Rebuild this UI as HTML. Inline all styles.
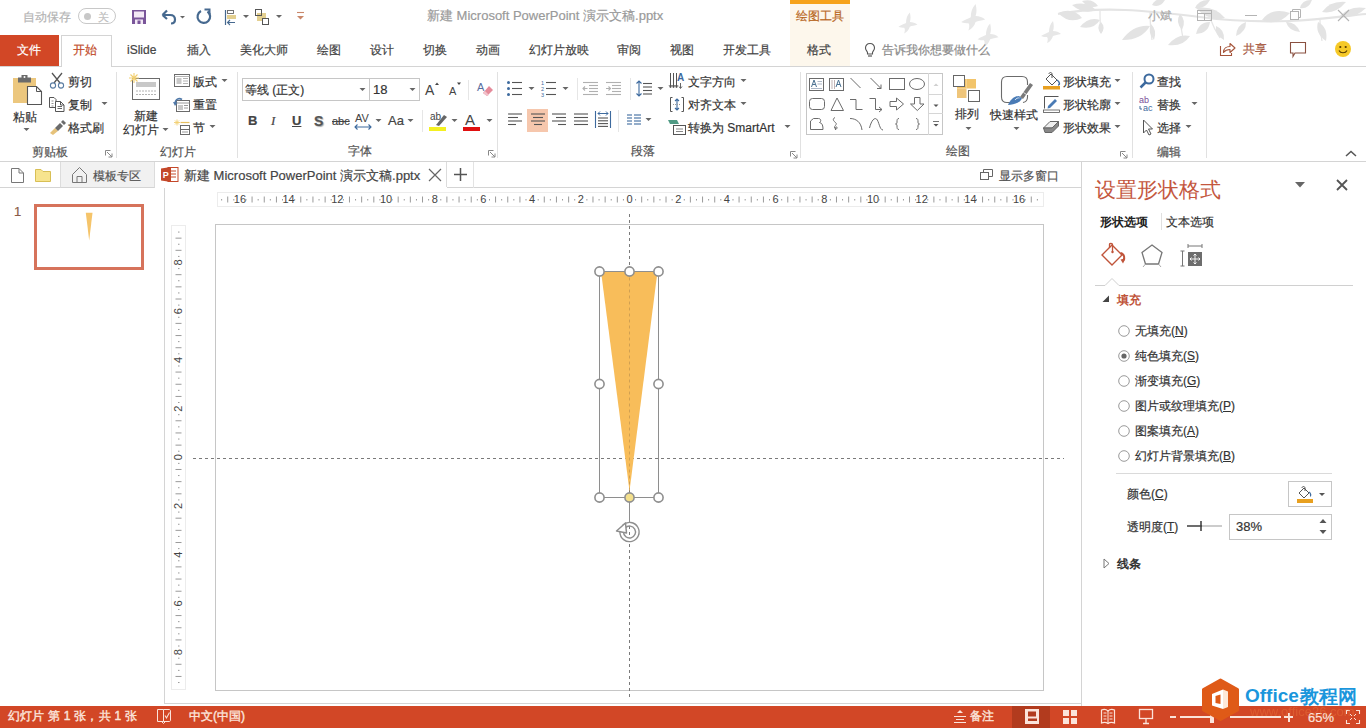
<!DOCTYPE html><html><head><meta charset="utf-8"><style>
*{margin:0;padding:0;box-sizing:border-box}
html,body{width:1366px;height:728px;overflow:hidden;background:#fff;font-family:"Liberation Sans",sans-serif;}
.t{position:absolute;white-space:nowrap;line-height:16px;-webkit-text-stroke-width:0.2px}
.a{position:absolute}
svg{position:absolute;overflow:visible}
</style></head><body><svg class="a" style="left:0;top:0" width="1366" height="66"><defs><filter id="bl"><feGaussianBlur stdDeviation="0.5"/></filter></defs><g filter="url(#bl)"><path d="M1058 14 C1080 10 1100 9 1125 10 C1150 11 1175 14 1200 17 C1230 21 1260 22 1290 21 C1320 20 1345 16 1366 14" stroke="#e4e4e4" stroke-width="2.2" fill="none"/><path d="M1100 10 C1100 18 1100 26 1101 33 M1150 12 C1150 22 1151 32 1152 40 M1180 15 C1180 25 1182 32 1183 38 M1320 20 C1320 28 1321 35 1322 41 M1210 18 C1213 26 1216 32 1220 38" stroke="#e6e6e6" stroke-width="1.3" fill="none"/><path d="M0 0 Q11.0 -9.0 24.5 0 Q11.0 9.0 0 0 Z" transform="translate(1082 18) rotate(-168.2)" fill="#e3e3e3"/><path d="M0 0 Q11.0 -7.5 24.5 0 Q11.0 7.5 0 0 Z" transform="translate(1096 10) rotate(-168.2)" fill="#e3e3e3"/><path d="M0 0 Q9.5 -7.5 21.2 0 Q9.5 7.5 0 0 Z" transform="translate(1100 20) rotate(160.7)" fill="#e3e3e3"/><path d="M0 0 Q5.4 -5.2 12.0 0 Q5.4 5.2 0 0 Z" transform="translate(1101 22) rotate(90.0)" fill="#e3e3e3"/><path d="M0 0 Q7.5 -6.0 16.8 0 Q7.5 6.0 0 0 Z" transform="translate(1098 6) rotate(-162.6)" fill="#e3e3e3"/><path d="M0 0 Q14.1 -9.0 31.3 0 Q14.1 9.0 0 0 Z" transform="translate(1150 26) rotate(153.4)" fill="#e3e3e3"/><path d="M0 0 Q7.3 -5.2 16.3 0 Q7.3 5.2 0 0 Z" transform="translate(1151 24) rotate(79.4)" fill="#e3e3e3"/><path d="M0 0 Q10.7 -7.5 23.8 0 Q10.7 7.5 0 0 Z" transform="translate(1190 36) rotate(157.8)" fill="#e3e3e3"/><path d="M0 0 Q7.3 -6.0 16.1 0 Q7.3 6.0 0 0 Z" transform="translate(1180 14) rotate(82.9)" fill="#e3e3e3"/><path d="M0 0 Q6.3 -6.0 13.9 0 Q6.3 6.0 0 0 Z" transform="translate(1152 5) rotate(-21.0)" fill="#e3e3e3"/><path d="M0 0 Q7.7 -6.0 17.0 0 Q7.7 6.0 0 0 Z" transform="translate(1195 8) rotate(-28.1)" fill="#e3e3e3"/><path d="M0 0 Q13.8 -9.0 30.7 0 Q13.8 9.0 0 0 Z" transform="translate(1225 18) rotate(-161.0)" fill="#e3e3e3"/><path d="M0 0 Q8.3 -7.5 18.4 0 Q8.3 7.5 0 0 Z" transform="translate(1210 22) rotate(139.4)" fill="#e3e3e3"/><path d="M0 0 Q7.3 -6.0 16.1 0 Q7.3 6.0 0 0 Z" transform="translate(1216 26) rotate(60.3)" fill="#e3e3e3"/><path d="M0 0 Q13.0 -10.5 28.9 0 Q13.0 10.5 0 0 Z" transform="translate(1262 20) rotate(-14.0)" fill="#e3e3e3"/><path d="M0 0 Q6.5 -6.0 14.4 0 Q6.5 6.0 0 0 Z" transform="translate(1300 8) rotate(-33.7)" fill="#e3e3e3"/><path d="M0 0 Q9.3 -7.5 20.6 0 Q9.3 7.5 0 0 Z" transform="translate(1318 22) rotate(67.2)" fill="#e3e3e3"/><path d="M0 0 Q11.7 -7.5 26.0 0 Q11.7 7.5 0 0 Z" transform="translate(1322 12) rotate(-22.6)" fill="#e3e3e3"/><path d="M0 0 Q12.2 -7.5 27.2 0 Q12.2 7.5 0 0 Z" transform="translate(1340 16) rotate(-17.1)" fill="#e3e3e3"/><path d="M0 0 Q7.7 -6.0 17.2 0 Q7.7 6.0 0 0 Z" transform="translate(1246 22) rotate(125.5)" fill="#e3e3e3"/><path d="M0 0 Q7.7 -6.0 17.2 0 Q7.7 6.0 0 0 Z" transform="translate(1286 22) rotate(35.5)" fill="#e3e3e3"/><g transform="translate(907 22) scale(0.95)"><path d="M-9 5 C-6 3 -3 2 -1 1 C-1 -3 0 -7 3 -10 C4 -6 4 -3 3 0 C6 0 9 1 11 3 C8 4 5 4 3 5 C2 8 0 11 -3 12 C-2 9 -2 7 -3 6 C-5 6 -7 6 -9 5 Z" fill="#e7e7e7"/></g><g transform="translate(972 16) scale(1.2)"><path d="M-9 5 C-6 3 -3 2 -1 1 C-1 -3 0 -7 3 -10 C4 -6 4 -3 3 0 C6 0 9 1 11 3 C8 4 5 4 3 5 C2 8 0 11 -3 12 C-2 9 -2 7 -3 6 C-5 6 -7 6 -9 5 Z" fill="#e7e7e7"/></g><g transform="translate(987 34) scale(1.05)"><path d="M-9 5 C-6 3 -3 2 -1 1 C-1 -3 0 -7 3 -10 C4 -6 4 -3 3 0 C6 0 9 1 11 3 C8 4 5 4 3 5 C2 8 0 11 -3 12 C-2 9 -2 7 -3 6 C-5 6 -7 6 -9 5 Z" fill="#e7e7e7"/></g><g transform="translate(1050 31) scale(1.0)"><path d="M-9 5 C-6 3 -3 2 -1 1 C-1 -3 0 -7 3 -10 C4 -6 4 -3 3 0 C6 0 9 1 11 3 C8 4 5 4 3 5 C2 8 0 11 -3 12 C-2 9 -2 7 -3 6 C-5 6 -7 6 -9 5 Z" fill="#e7e7e7"/></g></g></svg>
<div class="t" style="left:23px;top:9px;font-size:12px;color:#b4b4b4;font-weight:normal;">自动保存</div>
<div class="a" style="left:78px;top:8px;width:38px;height:16px;border:1px solid #c8c8c8;border-radius:8px;"></div>
<div class="a" style="left:84px;top:13px;width:7px;height:7px;border-radius:50%;background:#c8c8c8"></div>
<div class="t" style="left:98px;top:9px;font-size:11px;color:#c0c0c0;font-weight:normal;">关</div>
<svg style="left:131px;top:9px" width="16" height="16"><rect x="1" y="1" width="14" height="14" fill="#7a569a"/><rect x="3" y="2.5" width="10" height="6" fill="#f3e9f5"/><rect x="4" y="10.5" width="8" height="4.5" fill="#f3e9f5"/><rect x="6.5" y="11.5" width="3" height="3.5" fill="#7a569a"/></svg>
<svg style="left:159px;top:9px" width="30" height="16"><path d="M3.5 6 L8 1.5 M3.5 6 L8 10 M3.5 6 H11 C14.5 6 16 8 16 10.5 C16 13 14.5 14.5 12 14.5" stroke="#46698f" stroke-width="2.2" fill="none"/><path d="M21 7 L26 7 L23.5 9.5 Z" fill="#666"/></svg>
<svg style="left:195px;top:8px" width="18" height="18"><path d="M12.5 3.5 A6.3 6.3 0 1 1 6 3" stroke="#46698f" stroke-width="2.2" fill="none"/><path d="M9.5 1.5 H14.5 V6.5" stroke="#46698f" stroke-width="2" fill="none"/></svg>
<svg style="left:224px;top:8px" width="30" height="18"><path d="M1.5 2 V17" stroke="#46698f" stroke-width="1.2"/><rect x="3.5" y="2.5" width="6" height="3" fill="#fff" stroke="#666" stroke-width="0.9"/><rect x="3" y="7" width="9" height="4" fill="#e3cf8f"/><path d="M11 14.5 H3.5 M6 12 L3.5 14.5 L6 17" stroke="#46698f" stroke-width="1.1" fill="none"/><path d="M19 7 L25 7 L22 10 Z" fill="#666"/></svg>
<svg style="left:254px;top:8px" width="32" height="18"><rect x="3" y="5" width="9" height="8" fill="#e3cf8f"/><rect x="1.5" y="1.5" width="6" height="6" fill="none" stroke="#555"/><rect x="8.5" y="10.5" width="6" height="6" fill="#fff" stroke="#555"/><path d="M22 7 L28 7 L25 10 Z" fill="#666"/></svg>
<svg style="left:296px;top:11px" width="10" height="12"><path d="M1 1.5 H8" stroke="#c9876a" stroke-width="1.1"/><path d="M1 5 L8 5 L4.5 8.5 Z" fill="#c9876a"/></svg>
<div class="t" style="left:427px;top:8px;font-size:13px;color:#9a9a9a;font-weight:normal;">新建 Microsoft PowerPoint 演示文稿.pptx</div>
<div class="a" style="left:790px;top:0;width:60px;height:4px;background:#f6a21a"></div>
<div class="a" style="left:790px;top:4px;width:60px;height:62px;background:#fdf7ec"></div>
<div class="t" style="left:796px;top:8px;font-size:12px;color:#b8671e;font-weight:normal;">绘图工具</div>
<div class="t" style="left:1148px;top:8px;font-size:12px;color:#a8a8a8;font-weight:normal;">小斌</div>
<svg style="left:1196px;top:9px" width="18" height="14"><rect x="1.5" y="1.5" width="14" height="10" fill="none" stroke="#b4b4b4"/><path d="M1.5 4.5 H15.5 M8.5 4.5 V11.5" stroke="#b4b4b4"/></svg>
<div class="a" style="left:1245px;top:15px;width:12px;height:1px;background:#b4b4b4"></div>
<svg style="left:1289px;top:8px" width="14" height="14"><rect x="1.5" y="3.5" width="8" height="8" fill="none" stroke="#b4b4b4"/><path d="M3.5 3.5 V1.5 H11.5 V9.5 H9.5" stroke="#b4b4b4" fill="none"/></svg>
<svg style="left:1337px;top:9px" width="14" height="14"><path d="M1 1 L12 12 M12 1 L1 12" stroke="#b4b4b4" stroke-width="1.1"/></svg>
<div class="a" style="left:0;top:35px;width:59px;height:31px;background:#d24726"></div>
<div class="t" style="left:17px;top:42px;font-size:12px;color:#fff;font-weight:normal;">文件</div>
<div class="a" style="left:61px;top:35px;width:51px;height:32px;border:1px solid #d4d4d4;border-bottom:none;background:#fff"></div>
<div class="t" style="left:73px;top:42px;font-size:12px;color:#c14b29;font-weight:normal;">开始</div>
<div class="t" style="left:127px;top:42px;font-size:12px;color:#444;font-weight:normal;">iSlide</div>
<div class="t" style="left:187px;top:42px;font-size:12px;color:#444;font-weight:normal;">插入</div>
<div class="t" style="left:240px;top:42px;font-size:12px;color:#444;font-weight:normal;">美化大师</div>
<div class="t" style="left:317px;top:42px;font-size:12px;color:#444;font-weight:normal;">绘图</div>
<div class="t" style="left:370px;top:42px;font-size:12px;color:#444;font-weight:normal;">设计</div>
<div class="t" style="left:423px;top:42px;font-size:12px;color:#444;font-weight:normal;">切换</div>
<div class="t" style="left:476px;top:42px;font-size:12px;color:#444;font-weight:normal;">动画</div>
<div class="t" style="left:529px;top:42px;font-size:12px;color:#444;font-weight:normal;">幻灯片放映</div>
<div class="t" style="left:617px;top:42px;font-size:12px;color:#444;font-weight:normal;">审阅</div>
<div class="t" style="left:670px;top:42px;font-size:12px;color:#444;font-weight:normal;">视图</div>
<div class="t" style="left:723px;top:42px;font-size:12px;color:#444;font-weight:normal;">开发工具</div>
<div class="t" style="left:807px;top:42px;font-size:12px;color:#444;font-weight:normal;">格式</div>
<svg style="left:864px;top:42px" width="12" height="16"><path d="M6 1.5 C3 1.5 1.5 3.5 1.5 6 C1.5 8 3 9 3.5 10.5 V12 H8.5 V10.5 C9 9 10.5 8 10.5 6 C10.5 3.5 9 1.5 6 1.5 Z" fill="none" stroke="#555" stroke-width="1.1"/><path d="M4 14 H8" stroke="#555" stroke-width="1.2"/></svg>
<div class="t" style="left:882px;top:42px;font-size:12px;color:#8a8a8a;font-weight:normal;">告诉我你想要做什么</div>
<svg style="left:1219px;top:41px" width="18" height="16"><path d="M1.5 5 V14.5 H12.5 V12" stroke="#a5543a" stroke-width="1.1" fill="none"/><path d="M4.5 11.5 C4.5 7.5 7.5 5.5 11 5.5 V2.5 L16 7 L11 11.5 V8.5 C8.5 8.5 6 9.5 4.5 11.5 Z" fill="none" stroke="#a5543a" stroke-width="1.1" stroke-linejoin="round"/></svg>
<div class="t" style="left:1243px;top:41px;font-size:12px;color:#a5543a;font-weight:normal;">共享</div>
<svg style="left:1289px;top:41px" width="18" height="17"><path d="M1.5 1.5 H16.5 V12 H6 L4 15.5 V12 H1.5 Z" fill="none" stroke="#8a5040" stroke-width="1.1"/></svg>
<svg style="left:1334px;top:40px" width="18" height="18"><circle cx="9" cy="9" r="8" fill="#f6c928"/><circle cx="6.3" cy="7" r="1.1" fill="#5a3d00"/><circle cx="11.7" cy="7" r="1.1" fill="#5a3d00"/><path d="M5 10.5 C6.5 13.5 11.5 13.5 13 10.5" stroke="#5a3d00" stroke-width="1.2" fill="none"/></svg>
<div class="a" style="left:0;top:66px;width:1366px;height:1px;background:#d4d4d4"></div>
<div class="a" style="left:62px;top:66px;width:49px;height:1px;background:#fff"></div>
<svg style="left:12px;top:74px" width="32" height="32"><rect x="1" y="4" width="23" height="25" fill="#ecc77e"/><path d="M6 3.5 H19 V8.5 H6 Z" fill="#6b6b6b"/><path d="M9.5 1 H15.5 V4 H9.5 Z" fill="#6b6b6b"/><circle cx="12.5" cy="3" r="1" fill="#fff"/><path d="M15.5 12.5 H24.5 L29.5 17.5 V30.5 H15.5 Z" fill="#fff" stroke="#555" stroke-width="1.1"/><path d="M24.5 12.5 V17.5 H29.5" fill="none" stroke="#555" stroke-width="1"/></svg>
<div class="t" style="left:13px;top:109px;font-size:12px;color:#333;font-weight:normal;">粘贴</div>
<svg style="left:23px;top:128px" width="7" height="4"><path d="M0.5 0 H6.5 L3.5 3 Z" fill="#666"/></svg>
<svg style="left:49px;top:72px" width="16" height="17"><path d="M3 1 L11 11 M13 1 L5 11" stroke="#555" stroke-width="1.3"/><circle cx="4" cy="13.5" r="2.6" fill="none" stroke="#5b7da3" stroke-width="1.1"/><circle cx="12" cy="13.5" r="2.6" fill="none" stroke="#5b7da3" stroke-width="1.1"/></svg>
<div class="t" style="left:68px;top:74px;font-size:12px;color:#333;font-weight:normal;">剪切</div>
<svg style="left:48px;top:96px" width="18" height="17"><path d="M1.5 1.5 H6 L8 3.5 V11.5 H1.5 Z" fill="#fff" stroke="#555"/><path d="M3.5 5 H5.5 M3.5 7.5 H5.5 M3.5 10 H5.5" stroke="#777" stroke-width="0.8"/><path d="M7.5 5.5 H12.5 L16 9 V15.5 H7.5 Z" fill="#fff" stroke="#555"/><path d="M12.5 5.5 V9 H16" fill="none" stroke="#555"/><path d="M9.5 10.5 H14 M9.5 12.5 H14" stroke="#555" stroke-width="0.9"/></svg>
<div class="t" style="left:68px;top:97px;font-size:12px;color:#333;font-weight:normal;">复制</div>
<svg style="left:101px;top:102px" width="7" height="4"><path d="M0.5 0 H6.5 L3.5 3 Z" fill="#666"/></svg>
<svg style="left:49px;top:119px" width="18" height="16"><path d="M1 14 L6 9 L9 12 L4 16 Z" fill="#e6c27a"/><path d="M6 9 L11 4 L14 7 L9 12 Z" fill="#6b6b6b"/><path d="M12 3 L14 1 L17 4 L15 6 Z" fill="#6b6b6b"/></svg>
<div class="t" style="left:68px;top:120px;font-size:12px;color:#333;font-weight:normal;">格式刷</div>
<div class="t" style="left:32px;top:144px;font-size:12px;color:#555;font-weight:normal;">剪贴板</div>
<svg style="left:105px;top:150px" width="8" height="8"><path d="M0.5 0.5 H5.5 M0.5 0.5 V5.5" stroke="#888" stroke-width="1"/><path d="M2 2 L7 7 M7 3.5 V7 H3.5" stroke="#888" stroke-width="1" fill="none"/></svg>
<div class="a" style="left:116px;top:72px;width:1px;height:86px;background:#e1e1e1"></div>
<svg style="left:128px;top:72px" width="34" height="30"><rect x="4.5" y="6.5" width="27" height="21" fill="#fff" stroke="#6b6b6b"/><rect x="8" y="10" width="20" height="5" fill="#c8c8c8"/><path d="M8 19 H28 M8 22.5 H28" stroke="#b4b4b4" stroke-width="1" stroke-dasharray="2 1"/><path d="M6 1 V11 M1 6 H11 M2.5 2.5 L9.5 9.5 M9.5 2.5 L2.5 9.5" stroke="#f2cf70" stroke-width="1.1"/></svg>
<div class="t" style="left:134px;top:108px;font-size:12px;color:#333;font-weight:normal;">新建</div>
<div class="t" style="left:123px;top:122px;font-size:12px;color:#333;font-weight:normal;">幻灯片</div>
<svg style="left:162px;top:128px" width="7" height="4"><path d="M0.5 0 H6.5 L3.5 3 Z" fill="#666"/></svg>
<svg style="left:173px;top:73px" width="18" height="15"><rect x="1.5" y="1.5" width="15" height="12" fill="#fff" stroke="#6b6b6b"/><rect x="3.5" y="5" width="5" height="6" fill="#c8c8c8"/><path d="M10 5.5 H15 M10 8 H15 M10 10.5 H15 M1.5 3.5 H16.5" stroke="#b4b4b4"/></svg>
<div class="t" style="left:193px;top:74px;font-size:12px;color:#333;font-weight:normal;">版式</div>
<svg style="left:221px;top:79px" width="7" height="4"><path d="M0.5 0 H6.5 L3.5 3 Z" fill="#666"/></svg>
<svg style="left:173px;top:96px" width="18" height="17"><rect x="3.5" y="4.5" width="13" height="11" fill="#fff" stroke="#6b6b6b"/><rect x="5" y="9" width="5" height="5" fill="#c8c8c8"/><path d="M11 9.5 H15 M11 12 H15 M3.5 7 H16.5" stroke="#9a9a9a"/><path d="M2 8 C2 3 6 1.5 9 3.5" stroke="#4f78a8" stroke-width="1.6" fill="none"/><path d="M0 6 L2 10 L4.5 6.5 Z" fill="#4f78a8"/></svg>
<div class="t" style="left:193px;top:97px;font-size:12px;color:#333;font-weight:normal;">重置</div>
<svg style="left:173px;top:119px" width="18" height="17"><path d="M7.5 3.5 H16.5" stroke="#e8c060" stroke-width="1.2"/><rect x="7.5" y="6.5" width="9" height="9" fill="#fff" stroke="#6b6b6b"/><path d="M7.5 10.5 H16.5" stroke="#6b6b6b"/><rect x="9" y="12" width="6" height="2" fill="#ccc"/><path d="M4 0.5 V6.5 M1 3.5 H7 M2 1.5 L6 5.5 M6 1.5 L2 5.5" stroke="#f2cf70" stroke-width="0.9"/></svg>
<div class="t" style="left:193px;top:120px;font-size:12px;color:#333;font-weight:normal;">节</div>
<svg style="left:209px;top:125px" width="7" height="4"><path d="M0.5 0 H6.5 L3.5 3 Z" fill="#666"/></svg>
<div class="t" style="left:160px;top:144px;font-size:12px;color:#555;font-weight:normal;">幻灯片</div>
<div class="a" style="left:237px;top:72px;width:1px;height:86px;background:#e1e1e1"></div>
<div class="a" style="left:242px;top:78px;width:128px;height:23px;border:1px solid #c6c6c6;background:#fff"></div>
<div class="t" style="left:245px;top:82px;font-size:12px;color:#333;font-weight:normal;">等线 (正文)</div>
<svg style="left:359px;top:88px" width="7" height="4"><path d="M0.5 0 H6.5 L3.5 3 Z" fill="#666"/></svg>
<div class="a" style="left:369px;top:78px;width:51px;height:23px;border:1px solid #c6c6c6;background:#fff"></div>
<div class="t" style="left:373px;top:82px;font-size:12px;color:#333;font-weight:normal;font-size:13px;">18</div>
<svg style="left:409px;top:88px" width="7" height="4"><path d="M0.5 0 H6.5 L3.5 3 Z" fill="#666"/></svg>
<svg style="left:425px;top:81px" width="38" height="16"><text x="0" y="14" font-size="14" fill="#444" font-family="Liberation Sans">A</text><path d="M10 4 L12 1.5 L14 4 Z" fill="#444"/><text x="24" y="14" font-size="11" fill="#444" font-family="Liberation Sans">A</text><path d="M32 1.5 L36 1.5 L34 4 Z" fill="#444"/></svg>
<div class="a" style="left:468px;top:80px;width:1px;height:20px;background:#e6e6e6"></div>
<svg style="left:477px;top:80px" width="17" height="17"><text x="0" y="11" font-size="11" fill="#5a6fa0" font-family="Liberation Sans">A</text><path d="M6 13 L12 6 L16 10 L10 16 Z" fill="#e58a9a"/><path d="M6 13 L8 11 L12 15 L10 16 Z" fill="#f2c1ca"/></svg>
<div class="t" style="left:248px;top:113px;font-size:13px;font-weight:bold;color:#444">B</div>
<div class="t" style="left:271px;top:113px;font-size:13px;font-style:italic;font-family:'Liberation Serif';color:#444">I</div>
<div class="t" style="left:292px;top:113px;font-size:13px;text-decoration:underline;color:#444;font-weight:bold">U</div>
<div class="t" style="left:314px;top:113px;font-size:14px;font-weight:bold;color:#555;text-shadow:1px 1px 1px #aaa">S</div>
<div class="t" style="left:332px;top:113px;font-size:11px;color:#444;text-decoration:line-through">abc</div>
<svg style="left:354px;top:112px" width="20" height="20"><text x="1" y="10" font-size="11" fill="#444" font-family="Liberation Sans">AV</text><path d="M1 15 H17 M3.5 12.5 L1 15 L3.5 17.5 M14.5 12.5 L17 15 L14.5 17.5" stroke="#3d6a9e" stroke-width="1.1" fill="none"/></svg>
<svg style="left:375px;top:119px" width="7" height="4"><path d="M0.5 0 H6.5 L3.5 3 Z" fill="#666"/></svg>
<div class="t" style="left:388px;top:113px;font-size:13px;color:#444">Aa</div>
<svg style="left:407px;top:119px" width="7" height="4"><path d="M0.5 0 H6.5 L3.5 3 Z" fill="#666"/></svg>
<div class="a" style="left:422px;top:110px;width:1px;height:22px;background:#e6e6e6"></div>
<svg style="left:429px;top:110px" width="20" height="22"><text x="1" y="10" font-size="10" fill="#444" font-family="Liberation Sans">ab</text><path d="M7 15 L15 5 L18 7 L10 16 Z" fill="#666"/><rect x="0" y="17" width="17" height="4" fill="#f4f020"/></svg>
<svg style="left:451px;top:119px" width="7" height="4"><path d="M0.5 0 H6.5 L3.5 3 Z" fill="#666"/></svg>
<svg style="left:463px;top:110px" width="20" height="22"><text x="2" y="15" font-size="15" fill="#444" font-family="Liberation Sans">A</text><rect x="0" y="17" width="17" height="4" fill="#e01010"/></svg>
<svg style="left:486px;top:119px" width="7" height="4"><path d="M0.5 0 H6.5 L3.5 3 Z" fill="#666"/></svg>
<div class="t" style="left:348px;top:143px;font-size:12px;color:#555;font-weight:normal;">字体</div>
<svg style="left:488px;top:150px" width="8" height="8"><path d="M0.5 0.5 H5.5 M0.5 0.5 V5.5" stroke="#888" stroke-width="1"/><path d="M2 2 L7 7 M7 3.5 V7 H3.5" stroke="#888" stroke-width="1" fill="none"/></svg>
<div class="a" style="left:497px;top:72px;width:1px;height:86px;background:#e1e1e1"></div>
<svg style="left:506px;top:80px" width="18" height="17"><circle cx="2.5" cy="2.5" r="1.5" fill="#3d6a9e"/><circle cx="2.5" cy="8.5" r="1.5" fill="#3d6a9e"/><circle cx="2.5" cy="14.5" r="1.5" fill="#3d6a9e"/><path d="M6 2.5 H16" stroke="#555" stroke-width="1.1"/><path d="M6 8.5 H16" stroke="#555" stroke-width="1.1"/><path d="M6 14.5 H16" stroke="#555" stroke-width="1.1"/></svg>
<svg style="left:528px;top:87px" width="7" height="4"><path d="M0.5 0 H6.5 L3.5 3 Z" fill="#666"/></svg>
<svg style="left:541px;top:80px" width="18" height="17"><text x="0" y="5" font-size="5.5" fill="#3d6a9e" font-family="Liberation Sans">1</text><text x="0" y="11" font-size="5.5" fill="#3d6a9e" font-family="Liberation Sans">2</text><text x="0" y="17" font-size="5.5" fill="#3d6a9e" font-family="Liberation Sans">3</text><path d="M5 2.5 H15" stroke="#555" stroke-width="1.1"/><path d="M5 8.5 H15" stroke="#555" stroke-width="1.1"/><path d="M5 14.5 H15" stroke="#555" stroke-width="1.1"/></svg>
<svg style="left:562px;top:87px" width="7" height="4"><path d="M0.5 0 H6.5 L3.5 3 Z" fill="#666"/></svg>
<div class="a" style="left:577px;top:78px;width:1px;height:22px;background:#e6e6e6"></div>
<svg style="left:582px;top:81px" width="42" height="16"><path d="M1 1.5 H16" stroke="#b0b0b0" stroke-width="1.1"/><path d="M7 4.5 H16" stroke="#b0b0b0" stroke-width="1.1"/><path d="M7 7.5 H16" stroke="#b0b0b0" stroke-width="1.1"/><path d="M7 10.5 H16" stroke="#b0b0b0" stroke-width="1.1"/><path d="M1 13.5 H16" stroke="#b0b0b0" stroke-width="1.1"/><path d="M1 7.5 H5.5 M3 5.5 L1 7.5 L3 9.5" stroke="#b0b0b0" stroke-width="1.1" fill="none"/><path d="M24 1.5 H39" stroke="#b0b0b0" stroke-width="1.1"/><path d="M30 4.5 H39" stroke="#b0b0b0" stroke-width="1.1"/><path d="M30 7.5 H39" stroke="#b0b0b0" stroke-width="1.1"/><path d="M30 10.5 H39" stroke="#b0b0b0" stroke-width="1.1"/><path d="M24 13.5 H39" stroke="#b0b0b0" stroke-width="1.1"/><path d="M24 7.5 H28.5 M26.5 5.5 L28.5 7.5 L26.5 9.5" stroke="#b0b0b0" stroke-width="1.1" fill="none"/></svg>
<div class="a" style="left:630px;top:78px;width:1px;height:22px;background:#e6e6e6"></div>
<svg style="left:636px;top:79px" width="18" height="19"><path d="M3 2 V17 M0.5 4.5 L3 2 L5.5 4.5 M0.5 14.5 L3 17 L5.5 14.5" stroke="#3d6a9e" stroke-width="1.1" fill="none"/><path d="M7 4.5 H16" stroke="#555" stroke-width="1.1"/><path d="M7 8.0 H16" stroke="#555" stroke-width="1.1"/><path d="M7 11.5 H16" stroke="#555" stroke-width="1.1"/><path d="M7 15.0 H16" stroke="#555" stroke-width="1.1"/></svg>
<svg style="left:657px;top:87px" width="7" height="4"><path d="M0.5 0 H6.5 L3.5 3 Z" fill="#666"/></svg>
<svg style="left:507px;top:113px" width="16" height="14"><path d="M1 1.0 H15" stroke="#555" stroke-width="1.1"/><path d="M1 4.5 H11" stroke="#555" stroke-width="1.1"/><path d="M1 8.0 H15" stroke="#555" stroke-width="1.1"/><path d="M1 11.5 H9" stroke="#555" stroke-width="1.1"/></svg>
<div class="a" style="left:527px;top:109px;width:21px;height:23px;background:#f6c7ad"></div>
<svg style="left:530px;top:113px" width="16" height="14"><path d="M1 1.0 H15" stroke="#555" stroke-width="1.1"/><path d="M3 4.5 H13" stroke="#555" stroke-width="1.1"/><path d="M1 8.0 H15" stroke="#555" stroke-width="1.1"/><path d="M4 11.5 H12" stroke="#555" stroke-width="1.1"/></svg>
<svg style="left:551px;top:113px" width="16" height="14"><path d="M1 1.0 H15" stroke="#555" stroke-width="1.1"/><path d="M5 4.5 H15" stroke="#555" stroke-width="1.1"/><path d="M1 8.0 H15" stroke="#555" stroke-width="1.1"/><path d="M7 11.5 H15" stroke="#555" stroke-width="1.1"/></svg>
<svg style="left:573px;top:113px" width="16" height="14"><path d="M1 1.0 H15" stroke="#555" stroke-width="1.1"/><path d="M1 4.5 H15" stroke="#555" stroke-width="1.1"/><path d="M1 8.0 H15" stroke="#555" stroke-width="1.1"/><path d="M1 11.5 H15" stroke="#555" stroke-width="1.1"/></svg>
<svg style="left:594px;top:110px" width="18" height="19"><path d="M1.5 1 V18 M16.5 1 V18" stroke="#3d6a9e" stroke-width="1.1"/><path d="M4 3.5 H14 M6 1.5 L4 3.5 L6 5.5 M12 1.5 L14 3.5 L12 5.5" stroke="#3d6a9e" stroke-width="1" fill="none"/><path d="M4 8.0 H14" stroke="#555" stroke-width="1.1"/><path d="M4 10.8 H14" stroke="#555" stroke-width="1.1"/><path d="M4 13.6 H14" stroke="#555" stroke-width="1.1"/><path d="M4 16.4 H14" stroke="#555" stroke-width="1.1"/></svg>
<div class="a" style="left:618px;top:110px;width:1px;height:22px;background:#e6e6e6"></div>
<svg style="left:626px;top:114px" width="16" height="12"><path d="M1 1 H6" stroke="#3d6a9e" stroke-width="1.1"/><path d="M1 4 H6" stroke="#3d6a9e" stroke-width="1.1"/><path d="M1 7 H6" stroke="#3d6a9e" stroke-width="1.1"/><path d="M1 10 H6" stroke="#3d6a9e" stroke-width="1.1"/><path d="M8 1 H15" stroke="#3d6a9e" stroke-width="1.1"/><path d="M8 4 H15" stroke="#3d6a9e" stroke-width="1.1"/><path d="M8 7 H15" stroke="#3d6a9e" stroke-width="1.1"/><path d="M8 10 H15" stroke="#3d6a9e" stroke-width="1.1"/></svg>
<svg style="left:645px;top:118px" width="7" height="4"><path d="M0.5 0 H6.5 L3.5 3 Z" fill="#666"/></svg>
<svg style="left:669px;top:72px" width="16" height="18"><path d="M1.5 1 V15 M4.5 1 V15 M7.5 1 V15" stroke="#555"/><path d="M0 13 L1.5 16 L3 13 M3 13 L4.5 16 L6 13 M6 13 L7.5 16 L9 13" fill="none" stroke="#555" stroke-width="0.8"/><text x="8" y="9" font-size="10" font-weight="bold" fill="#3d6a9e" font-family="Liberation Sans">A</text><path d="M11.5 11 V16 M10 14.5 L11.5 16.5 L13 14.5" stroke="#555" stroke-width="0.9" fill="none"/></svg>
<div class="t" style="left:688px;top:74px;font-size:12px;color:#333;font-weight:normal;">文字方向</div>
<svg style="left:740px;top:79px" width="7" height="4"><path d="M0.5 0 H6.5 L3.5 3 Z" fill="#666"/></svg>
<svg style="left:669px;top:96px" width="16" height="17"><path d="M3.5 1.5 H1.5 V15.5 H3.5 M12.5 1.5 H14.5 V15.5 H12.5" stroke="#555" fill="none"/><path d="M8 3 V14 M6 5 L8 3 L10 5 M6 12 L8 14 L10 12" stroke="#3d6a9e" stroke-width="1.1" fill="none"/><path d="M4 8.5 H12" stroke="#999" stroke-dasharray="1 1"/></svg>
<div class="t" style="left:688px;top:97px;font-size:12px;color:#333;font-weight:normal;">对齐文本</div>
<svg style="left:740px;top:102px" width="7" height="4"><path d="M0.5 0 H6.5 L3.5 3 Z" fill="#666"/></svg>
<svg style="left:668px;top:119px" width="20" height="17"><path d="M0 1 H9 L11 5 H2 Z" fill="#4f9a84"/><rect x="5.5" y="6.5" width="12" height="9" fill="#fff" stroke="#555"/><path d="M8 10 H15 M8 12.5 H15" stroke="#888"/></svg>
<div class="t" style="left:688px;top:120px;font-size:12px;color:#333;font-weight:normal;">转换为 SmartArt</div>
<svg style="left:784px;top:125px" width="7" height="4"><path d="M0.5 0 H6.5 L3.5 3 Z" fill="#666"/></svg>
<div class="t" style="left:631px;top:143px;font-size:12px;color:#555;font-weight:normal;">段落</div>
<svg style="left:790px;top:151px" width="8" height="8"><path d="M0.5 0.5 H5.5 M0.5 0.5 V5.5" stroke="#888" stroke-width="1"/><path d="M2 2 L7 7 M7 3.5 V7 H3.5" stroke="#888" stroke-width="1" fill="none"/></svg>
<div class="a" style="left:800px;top:72px;width:1px;height:86px;background:#e1e1e1"></div>
<div class="a" style="left:806px;top:73px;width:137px;height:62px;border:1px solid #c6c6c6;background:#fff"></div>
<div class="a" style="left:928px;top:73px;width:1px;height:62px;background:#d6d6d6"></div>
<div class="a" style="left:928px;top:94px;width:15px;height:1px;background:#d6d6d6"></div>
<div class="a" style="left:928px;top:113px;width:15px;height:1px;background:#d6d6d6"></div>
<svg style="left:929px;top:74px" width="14" height="60"><path d="M4.5 12 L7 9.5 L9.5 12 Z" fill="#d0d0d0"/><path d="M4.5 30.5 H9.5 L7 33 Z" fill="#555"/><path d="M4 47.5 H10" stroke="#666" stroke-width="0.9"/><path d="M4.5 50 H9.5 L7 52.5 Z" fill="#555"/></svg>
<svg style="left:806px;top:73px" width="122" height="62">
<rect x="3.5" y="5.5" width="14" height="12" fill="none" stroke="#6b6b6b"/><path d="M5.5 14 L8 7 L10.5 14 M6.5 11.5 H9.5" stroke="#4a7090" stroke-width="1" fill="none"/><path d="M11.5 8.5 H16 M11.5 11 H16 M5 15.5 H16" stroke="#8a9ab0" stroke-width="0.7"/>
<rect x="23.5" y="5.5" width="14" height="12" fill="none" stroke="#6b6b6b"/><path d="M26 7 V16 M28.5 7 V16" stroke="#9a8080" stroke-width="0.6"/><path d="M30 14 L32.5 7 L35 14 M31 11.5 H34" stroke="#4a7090" stroke-width="1" fill="none"/>
<path d="M44.5 5 L54.5 15" stroke="#6b6b6b"/>
<path d="M64.5 5 L75 15.5 M71 15.5 H75 V11.5" stroke="#6b6b6b" fill="none"/>
<rect x="83.5" y="5.5" width="15" height="11" fill="none" stroke="#6b6b6b"/>
<ellipse cx="111" cy="11" rx="7.5" ry="5.5" fill="none" stroke="#6b6b6b"/>
<rect x="3.5" y="25.5" width="15" height="11" rx="3" fill="none" stroke="#6b6b6b"/>
<path d="M31 25 L37.5 37.5 H25 Z" fill="none" stroke="#6b6b6b"/>
<path d="M44 26.5 H50 V36.5 H56.5" stroke="#6b6b6b" fill="none"/>
<path d="M63.5 25.5 H69.5 V36.5 H76 M73 34 L76 36.5 L73 39" stroke="#6b6b6b" fill="none"/>
<path d="M84 28.5 H90.5 V25 L97.5 31 L90.5 37 V33.5 H84 Z" fill="none" stroke="#6b6b6b"/>
<path d="M108.5 24.5 H114 V31 H118 L111.3 37.5 L104.5 31 H108.5 Z" fill="none" stroke="#6b6b6b"/>
<path d="M4.5 48 L7.5 45.5 H12.5 C15 45.5 15.5 48.5 13.5 49.5 C16.5 50 17 53 17 56.5 H4.5 Z" fill="none" stroke="#6b6b6b"/>
<path d="M29 44.5 C26 46 27.5 48 29.5 49.5 C31.5 51 29 52.5 28.5 54 C28.5 56.5 31.5 56.5 31 54.5 C30.5 53 29 54 29.5 57" fill="none" stroke="#6b6b6b"/>
<path d="M44 45.5 C50 45.5 55 49 56 57" fill="none" stroke="#6b6b6b"/>
<path d="M63.5 55 C65.5 47 68.5 44.5 70.5 46 C73 48 73.5 57 77 57" fill="none" stroke="#6b6b6b"/>
<path d="M93 45.5 C91 45.5 91 47 91 49 C91 50.5 90.5 51 89.5 51 C90.5 51 91 51.5 91 53 C91 55 91 56.5 93 56.5" fill="none" stroke="#6b6b6b"/>
<path d="M110 45.5 C112 45.5 112 47 112 49 C112 50.5 112.5 51 113.5 51 C112.5 51 112 51.5 112 53 C112 55 112 56.5 110 56.5" fill="none" stroke="#6b6b6b"/>
</svg>
<svg style="left:950px;top:72px" width="34" height="32"><rect x="7" y="7" width="9.5" height="9.5" fill="#f2c46a"/><rect x="16.5" y="16.5" width="0" height="0"/><rect x="7" y="16.5" width="9.5" height="9.5" fill="#efc57a"/><rect x="16.5" y="7" width="9.5" height="9.5" fill="#f2c46a"/><rect x="3.5" y="3.5" width="11" height="11" fill="#fff" stroke="#666"/><rect x="18.5" y="18.5" width="11" height="11" fill="#fff" stroke="#666"/></svg>
<div class="t" style="left:955px;top:106px;font-size:12px;color:#333;font-weight:normal;">排列</div>
<svg style="left:965px;top:127px" width="7" height="4"><path d="M0.5 0 H6.5 L3.5 3 Z" fill="#666"/></svg>
<svg style="left:998px;top:73px" width="36" height="36"><path d="M17 29.5 H9 C5.5 29.5 3.5 27.5 3.5 24 V9 C3.5 5.5 5.5 3.5 9 3.5 H24 C27.5 3.5 29.5 5.5 29.5 9 V12" fill="none" stroke="#6b6b6b" stroke-width="1.1"/><path d="M29.5 22 V24 C29.5 27 28 29 25 29.5" fill="none" stroke="#6b6b6b" stroke-width="1.1"/><path d="M22 24 L32 10 L35 12 L25 26 Z" fill="#7a7a7a"/><path d="M25.5 19.5 L28.5 21.5" stroke="#fff" stroke-width="0.8"/><path d="M10 32 C12 27 16 23 21 23 L24 25.5 C22 30 15 32 10 32 Z" fill="#4a7bb5"/><path d="M17 27 C18 25.5 20 24.5 21.5 25" stroke="#cfe0f2" stroke-width="1" fill="none"/></svg>
<div class="t" style="left:990px;top:107px;font-size:12px;color:#333;font-weight:normal;">快速样式</div>
<svg style="left:1013px;top:127px" width="7" height="4"><path d="M0.5 0 H6.5 L3.5 3 Z" fill="#666"/></svg>
<svg style="left:1042px;top:72px" width="20" height="18"><path d="M4 7 L9 2 L15 8 L10 13 Z" fill="#fff" stroke="#555"/><path d="M7 2 C7 0 10 0 10 2 V6" stroke="#555" fill="none"/><path d="M15 8 C18 10 18 13 16 13" stroke="#3d6a9e" stroke-width="1.5" fill="none"/><rect x="1" y="14" width="17" height="3.5" fill="#e8a020"/></svg>
<div class="t" style="left:1063px;top:74px;font-size:12px;color:#333;font-weight:normal;">形状填充</div>
<svg style="left:1114px;top:79px" width="7" height="4"><path d="M0.5 0 H6.5 L3.5 3 Z" fill="#666"/></svg>
<svg style="left:1042px;top:95px" width="20" height="18"><path d="M2.5 13.5 V1.5 H16.5" stroke="#555" fill="none"/><path d="M6 11 L13 4 L15 6 L8 13 L5.5 13.5 Z" fill="#4a7bb5"/><rect x="1.5" y="15" width="16" height="2.5" fill="#fff" stroke="#555" stroke-width="0.8"/></svg>
<div class="t" style="left:1063px;top:97px;font-size:12px;color:#333;font-weight:normal;">形状轮廓</div>
<svg style="left:1114px;top:102px" width="7" height="4"><path d="M0.5 0 H6.5 L3.5 3 Z" fill="#666"/></svg>
<svg style="left:1042px;top:119px" width="20" height="16"><path d="M1.5 9 L8 2.5 H16.5 L10 9 Z" fill="#eee" stroke="#666"/><path d="M1.5 9 H10 L16.5 2.5 V7 L10 13.5 H3 Z" fill="#888" stroke="#666"/></svg>
<div class="t" style="left:1063px;top:120px;font-size:12px;color:#333;font-weight:normal;">形状效果</div>
<svg style="left:1114px;top:125px" width="7" height="4"><path d="M0.5 0 H6.5 L3.5 3 Z" fill="#666"/></svg>
<div class="t" style="left:946px;top:143px;font-size:12px;color:#555;font-weight:normal;">绘图</div>
<svg style="left:1120px;top:151px" width="8" height="8"><path d="M0.5 0.5 H5.5 M0.5 0.5 V5.5" stroke="#888" stroke-width="1"/><path d="M2 2 L7 7 M7 3.5 V7 H3.5" stroke="#888" stroke-width="1" fill="none"/></svg>
<div class="a" style="left:1132px;top:72px;width:1px;height:86px;background:#e1e1e1"></div>
<svg style="left:1139px;top:73px" width="16" height="16"><circle cx="10" cy="6" r="4.5" fill="none" stroke="#3d6a9e" stroke-width="2"/><path d="M7 9 L1.5 14.5" stroke="#3d6a9e" stroke-width="2.5"/></svg>
<div class="t" style="left:1157px;top:74px;font-size:12px;color:#333;font-weight:normal;">查找</div>
<svg style="left:1138px;top:95px" width="18" height="18"><text x="1" y="8" font-size="9" fill="#7a4f98" font-family="Liberation Sans">ab</text><text x="5" y="16" font-size="9" fill="#3d6a9e" font-family="Liberation Sans">ac</text><path d="M2 11 V14 H4" stroke="#3d6a9e" fill="none"/></svg>
<div class="t" style="left:1157px;top:97px;font-size:12px;color:#333;font-weight:normal;">替换</div>
<svg style="left:1191px;top:102px" width="7" height="4"><path d="M0.5 0 H6.5 L3.5 3 Z" fill="#666"/></svg>
<svg style="left:1142px;top:119px" width="12" height="17"><path d="M1.5 1 L1.5 14 L4.5 11 L7 16 L9 15 L6.5 10 L10.5 10 Z" fill="#fff" stroke="#555"/></svg>
<div class="t" style="left:1157px;top:120px;font-size:12px;color:#333;font-weight:normal;">选择</div>
<svg style="left:1185px;top:125px" width="7" height="4"><path d="M0.5 0 H6.5 L3.5 3 Z" fill="#666"/></svg>
<div class="t" style="left:1157px;top:144px;font-size:12px;color:#555;font-weight:normal;">编辑</div>
<div class="a" style="left:1206px;top:72px;width:1px;height:86px;background:#e1e1e1"></div>
<svg style="left:1345px;top:150px" width="12" height="8"><path d="M1 6 L6 1.5 L11 6" stroke="#555" stroke-width="1.5" fill="none"/></svg>
<div class="a" style="left:0;top:161px;width:1366px;height:1px;background:#d4d4d4"></div>
<div class="a" style="left:0;top:187px;width:1082px;height:1px;background:#d4d4d4"></div>
<svg style="left:10px;top:167px" width="16" height="17"><path d="M1.5 1.5 H9 L13.5 6 V15.5 H1.5 Z M9 1.5 V6 H13.5" fill="#fff" stroke="#777"/></svg>
<svg style="left:34px;top:167px" width="19" height="16"><path d="M1.5 2.5 H7 L9 4.5 H16.5 V14.5 H1.5 Z" fill="#f7e48e" stroke="#d8bf55"/></svg>
<div class="a" style="left:60px;top:162px;width:95px;height:26px;background:#f1f1f1;border-left:1px solid #dcdcdc;border-right:1px solid #dcdcdc;border-bottom:1px solid #d4d4d4"></div>
<svg style="left:71px;top:166px" width="17" height="18"><path d="M1.5 8.5 L8.5 1.5 L15.5 8.5 V16.5 H1.5 Z" fill="none" stroke="#777"/><path d="M6 16.5 V10.5 H11 V16.5" fill="none" stroke="#777"/></svg>
<div class="t" style="left:93px;top:168px;font-size:12px;color:#555;font-weight:normal;">模板专区</div>
<div class="a" style="left:155px;top:162px;width:292px;height:26px;background:#fff;border-right:1px solid #dcdcdc"></div>
<div class="a" style="left:155px;top:187px;width:292px;height:1px;background:#fff"></div>
<svg style="left:161px;top:166px" width="18" height="17"><rect x="7" y="1.5" width="10" height="14" fill="#fff" stroke="#c4482a"/><path d="M10 5 H15 M10 8 H15 M10 11 H15" stroke="#c4482a"/><path d="M0 2.5 L10 1 V16 L0 14.5 Z" fill="#c4482a"/><text x="1.8" y="12" font-size="9" font-weight="bold" fill="#fff" font-family="Liberation Sans">P</text></svg>
<div class="t" style="left:184px;top:168px;font-size:13px;color:#444;font-weight:normal;">新建 Microsoft PowerPoint 演示文稿.pptx</div>
<svg style="left:428px;top:168px" width="14" height="14"><path d="M1 1 L13 13 M13 1 L1 13" stroke="#666" stroke-width="1.2"/></svg>
<svg style="left:453px;top:167px" width="15" height="15"><path d="M7.5 1 V14 M1 7.5 H14" stroke="#555" stroke-width="1.5"/></svg>
<div class="a" style="left:473px;top:162px;width:1px;height:26px;background:#e3e3e3"></div>
<svg style="left:979px;top:168px" width="15" height="13"><rect x="1.5" y="4.5" width="8" height="7" fill="none" stroke="#666"/><path d="M4.5 4.5 V1.5 H13.5 V8.5 H9.5" fill="none" stroke="#666"/></svg>
<div class="t" style="left:999px;top:168px;font-size:12px;color:#555;font-weight:normal;">显示多窗口</div>
<div class="a" style="left:164px;top:188px;width:1px;height:516px;background:#d4d4d4"></div>
<div class="t" style="left:14px;top:204px;font-size:12px;color:#8a5a48;font-weight:normal;font-size:13px;">1</div>
<div class="a" style="left:34px;top:204px;width:110px;height:66px;border:3px solid #d6735b;background:#fff"></div>
<svg style="left:85px;top:212px" width="9" height="30"><path d="M0.8 0.8 H7.5 L4.2 28.5 Z" fill="#f5c46a"/></svg>
<div class="a" style="left:165px;top:703px;width:917px;height:1px;background:#d4d4d4"></div>
<div class="a" style="left:1081px;top:162px;width:1px;height:544px;background:#d4d4d4"></div>
<svg style="left:217px;top:192px" width="827" height="15"><rect x="0.5" y="0.5" width="826" height="14" fill="#fff" stroke="#d8d8d8" stroke-dasharray="1 1"/><path d="M4.637499999999989 7 V8.5" stroke="#9a9a9a" stroke-width="1"/><path d="M10.724999999999966 4.5 V10.5" stroke="#9a9a9a" stroke-width="1"/><path d="M16.8125 7 V8.5" stroke="#9a9a9a" stroke-width="1"/><text x="22.899999999999977" y="11" font-size="11" fill="#444" text-anchor="middle" font-family="Liberation Sans">16</text><path d="M28.987499999999955 7 V8.5" stroke="#9a9a9a" stroke-width="1"/><path d="M35.07499999999999 4.5 V10.5" stroke="#9a9a9a" stroke-width="1"/><path d="M41.162499999999966 7 V8.5" stroke="#9a9a9a" stroke-width="1"/><path d="M47.25 4.5 V10.5" stroke="#9a9a9a" stroke-width="1"/><path d="M53.33749999999998 7 V8.5" stroke="#9a9a9a" stroke-width="1"/><path d="M59.424999999999955 4.5 V10.5" stroke="#9a9a9a" stroke-width="1"/><path d="M65.51249999999999 7 V8.5" stroke="#9a9a9a" stroke-width="1"/><text x="71.59999999999997" y="11" font-size="11" fill="#444" text-anchor="middle" font-family="Liberation Sans">14</text><path d="M77.6875 7 V8.5" stroke="#9a9a9a" stroke-width="1"/><path d="M83.77499999999998 4.5 V10.5" stroke="#9a9a9a" stroke-width="1"/><path d="M89.86249999999995 7 V8.5" stroke="#9a9a9a" stroke-width="1"/><path d="M95.94999999999999 4.5 V10.5" stroke="#9a9a9a" stroke-width="1"/><path d="M102.03749999999997 7 V8.5" stroke="#9a9a9a" stroke-width="1"/><path d="M108.125 4.5 V10.5" stroke="#9a9a9a" stroke-width="1"/><path d="M114.21249999999998 7 V8.5" stroke="#9a9a9a" stroke-width="1"/><text x="120.29999999999995" y="11" font-size="11" fill="#444" text-anchor="middle" font-family="Liberation Sans">12</text><path d="M126.38749999999999 7 V8.5" stroke="#9a9a9a" stroke-width="1"/><path d="M132.47499999999997 4.5 V10.5" stroke="#9a9a9a" stroke-width="1"/><path d="M138.5625 7 V8.5" stroke="#9a9a9a" stroke-width="1"/><path d="M144.64999999999998 4.5 V10.5" stroke="#9a9a9a" stroke-width="1"/><path d="M150.7375 7 V8.5" stroke="#9a9a9a" stroke-width="1"/><path d="M156.825 4.5 V10.5" stroke="#9a9a9a" stroke-width="1"/><path d="M162.91250000000002 7 V8.5" stroke="#9a9a9a" stroke-width="1"/><text x="169.0" y="11" font-size="11" fill="#444" text-anchor="middle" font-family="Liberation Sans">10</text><path d="M175.08749999999998 7 V8.5" stroke="#9a9a9a" stroke-width="1"/><path d="M181.17499999999995 4.5 V10.5" stroke="#9a9a9a" stroke-width="1"/><path d="M187.2625 7 V8.5" stroke="#9a9a9a" stroke-width="1"/><path d="M193.35000000000002 4.5 V10.5" stroke="#9a9a9a" stroke-width="1"/><path d="M199.4375 7 V8.5" stroke="#9a9a9a" stroke-width="1"/><path d="M205.52499999999998 4.5 V10.5" stroke="#9a9a9a" stroke-width="1"/><path d="M211.61249999999995 7 V8.5" stroke="#9a9a9a" stroke-width="1"/><text x="217.7" y="11" font-size="11" fill="#444" text-anchor="middle" font-family="Liberation Sans">8</text><path d="M223.78750000000002 7 V8.5" stroke="#9a9a9a" stroke-width="1"/><path d="M229.875 4.5 V10.5" stroke="#9a9a9a" stroke-width="1"/><path d="M235.96249999999998 7 V8.5" stroke="#9a9a9a" stroke-width="1"/><path d="M242.04999999999995 4.5 V10.5" stroke="#9a9a9a" stroke-width="1"/><path d="M248.1375 7 V8.5" stroke="#9a9a9a" stroke-width="1"/><path d="M254.22500000000002 4.5 V10.5" stroke="#9a9a9a" stroke-width="1"/><path d="M260.3125 7 V8.5" stroke="#9a9a9a" stroke-width="1"/><text x="266.4" y="11" font-size="11" fill="#444" text-anchor="middle" font-family="Liberation Sans">6</text><path d="M272.48749999999995 7 V8.5" stroke="#9a9a9a" stroke-width="1"/><path d="M278.575 4.5 V10.5" stroke="#9a9a9a" stroke-width="1"/><path d="M284.6625 7 V8.5" stroke="#9a9a9a" stroke-width="1"/><path d="M290.75 4.5 V10.5" stroke="#9a9a9a" stroke-width="1"/><path d="M296.8375 7 V8.5" stroke="#9a9a9a" stroke-width="1"/><path d="M302.92499999999995 4.5 V10.5" stroke="#9a9a9a" stroke-width="1"/><path d="M309.01250000000005 7 V8.5" stroke="#9a9a9a" stroke-width="1"/><text x="315.1" y="11" font-size="11" fill="#444" text-anchor="middle" font-family="Liberation Sans">4</text><path d="M321.1875 7 V8.5" stroke="#9a9a9a" stroke-width="1"/><path d="M327.275 4.5 V10.5" stroke="#9a9a9a" stroke-width="1"/><path d="M333.36249999999995 7 V8.5" stroke="#9a9a9a" stroke-width="1"/><path d="M339.45000000000005 4.5 V10.5" stroke="#9a9a9a" stroke-width="1"/><path d="M345.5375 7 V8.5" stroke="#9a9a9a" stroke-width="1"/><path d="M351.625 4.5 V10.5" stroke="#9a9a9a" stroke-width="1"/><path d="M357.7125 7 V8.5" stroke="#9a9a9a" stroke-width="1"/><text x="363.79999999999995" y="11" font-size="11" fill="#444" text-anchor="middle" font-family="Liberation Sans">2</text><path d="M369.88750000000005 7 V8.5" stroke="#9a9a9a" stroke-width="1"/><path d="M375.975 4.5 V10.5" stroke="#9a9a9a" stroke-width="1"/><path d="M382.0625 7 V8.5" stroke="#9a9a9a" stroke-width="1"/><path d="M388.15 4.5 V10.5" stroke="#9a9a9a" stroke-width="1"/><path d="M394.23749999999995 7 V8.5" stroke="#9a9a9a" stroke-width="1"/><path d="M400.32500000000005 4.5 V10.5" stroke="#9a9a9a" stroke-width="1"/><path d="M406.4125 7 V8.5" stroke="#9a9a9a" stroke-width="1"/><text x="412.5" y="11" font-size="11" fill="#444" text-anchor="middle" font-family="Liberation Sans">0</text><path d="M418.5875 7 V8.5" stroke="#9a9a9a" stroke-width="1"/><path d="M424.67499999999995 4.5 V10.5" stroke="#9a9a9a" stroke-width="1"/><path d="M430.76250000000005 7 V8.5" stroke="#9a9a9a" stroke-width="1"/><path d="M436.85 4.5 V10.5" stroke="#9a9a9a" stroke-width="1"/><path d="M442.9375 7 V8.5" stroke="#9a9a9a" stroke-width="1"/><path d="M449.025 4.5 V10.5" stroke="#9a9a9a" stroke-width="1"/><path d="M455.11249999999995 7 V8.5" stroke="#9a9a9a" stroke-width="1"/><text x="461.20000000000005" y="11" font-size="11" fill="#444" text-anchor="middle" font-family="Liberation Sans">2</text><path d="M467.2875 7 V8.5" stroke="#9a9a9a" stroke-width="1"/><path d="M473.375 4.5 V10.5" stroke="#9a9a9a" stroke-width="1"/><path d="M479.4625 7 V8.5" stroke="#9a9a9a" stroke-width="1"/><path d="M485.54999999999995 4.5 V10.5" stroke="#9a9a9a" stroke-width="1"/><path d="M491.63750000000005 7 V8.5" stroke="#9a9a9a" stroke-width="1"/><path d="M497.725 4.5 V10.5" stroke="#9a9a9a" stroke-width="1"/><path d="M503.8125 7 V8.5" stroke="#9a9a9a" stroke-width="1"/><text x="509.9" y="11" font-size="11" fill="#444" text-anchor="middle" font-family="Liberation Sans">4</text><path d="M515.9875 7 V8.5" stroke="#9a9a9a" stroke-width="1"/><path d="M522.075 4.5 V10.5" stroke="#9a9a9a" stroke-width="1"/><path d="M528.1625 7 V8.5" stroke="#9a9a9a" stroke-width="1"/><path d="M534.25 4.5 V10.5" stroke="#9a9a9a" stroke-width="1"/><path d="M540.3375 7 V8.5" stroke="#9a9a9a" stroke-width="1"/><path d="M546.425 4.5 V10.5" stroke="#9a9a9a" stroke-width="1"/><path d="M552.5125 7 V8.5" stroke="#9a9a9a" stroke-width="1"/><text x="558.6" y="11" font-size="11" fill="#444" text-anchor="middle" font-family="Liberation Sans">6</text><path d="M564.6875 7 V8.5" stroke="#9a9a9a" stroke-width="1"/><path d="M570.775 4.5 V10.5" stroke="#9a9a9a" stroke-width="1"/><path d="M576.8625 7 V8.5" stroke="#9a9a9a" stroke-width="1"/><path d="M582.95 4.5 V10.5" stroke="#9a9a9a" stroke-width="1"/><path d="M589.0375 7 V8.5" stroke="#9a9a9a" stroke-width="1"/><path d="M595.125 4.5 V10.5" stroke="#9a9a9a" stroke-width="1"/><path d="M601.2125 7 V8.5" stroke="#9a9a9a" stroke-width="1"/><text x="607.3" y="11" font-size="11" fill="#444" text-anchor="middle" font-family="Liberation Sans">8</text><path d="M613.3875 7 V8.5" stroke="#9a9a9a" stroke-width="1"/><path d="M619.475 4.5 V10.5" stroke="#9a9a9a" stroke-width="1"/><path d="M625.5625 7 V8.5" stroke="#9a9a9a" stroke-width="1"/><path d="M631.65 4.5 V10.5" stroke="#9a9a9a" stroke-width="1"/><path d="M637.7375 7 V8.5" stroke="#9a9a9a" stroke-width="1"/><path d="M643.825 4.5 V10.5" stroke="#9a9a9a" stroke-width="1"/><path d="M649.9125 7 V8.5" stroke="#9a9a9a" stroke-width="1"/><text x="656.0" y="11" font-size="11" fill="#444" text-anchor="middle" font-family="Liberation Sans">10</text><path d="M662.0875 7 V8.5" stroke="#9a9a9a" stroke-width="1"/><path d="M668.175 4.5 V10.5" stroke="#9a9a9a" stroke-width="1"/><path d="M674.2625 7 V8.5" stroke="#9a9a9a" stroke-width="1"/><path d="M680.35 4.5 V10.5" stroke="#9a9a9a" stroke-width="1"/><path d="M686.4375 7 V8.5" stroke="#9a9a9a" stroke-width="1"/><path d="M692.5250000000001 4.5 V10.5" stroke="#9a9a9a" stroke-width="1"/><path d="M698.6125 7 V8.5" stroke="#9a9a9a" stroke-width="1"/><text x="704.7" y="11" font-size="11" fill="#444" text-anchor="middle" font-family="Liberation Sans">12</text><path d="M710.7875 7 V8.5" stroke="#9a9a9a" stroke-width="1"/><path d="M716.875 4.5 V10.5" stroke="#9a9a9a" stroke-width="1"/><path d="M722.9625000000001 7 V8.5" stroke="#9a9a9a" stroke-width="1"/><path d="M729.05 4.5 V10.5" stroke="#9a9a9a" stroke-width="1"/><path d="M735.1375 7 V8.5" stroke="#9a9a9a" stroke-width="1"/><path d="M741.225 4.5 V10.5" stroke="#9a9a9a" stroke-width="1"/><path d="M747.3125 7 V8.5" stroke="#9a9a9a" stroke-width="1"/><text x="753.4000000000001" y="11" font-size="11" fill="#444" text-anchor="middle" font-family="Liberation Sans">14</text><path d="M759.4875 7 V8.5" stroke="#9a9a9a" stroke-width="1"/><path d="M765.575 4.5 V10.5" stroke="#9a9a9a" stroke-width="1"/><path d="M771.6625 7 V8.5" stroke="#9a9a9a" stroke-width="1"/><path d="M777.75 4.5 V10.5" stroke="#9a9a9a" stroke-width="1"/><path d="M783.8375000000001 7 V8.5" stroke="#9a9a9a" stroke-width="1"/><path d="M789.925 4.5 V10.5" stroke="#9a9a9a" stroke-width="1"/><path d="M796.0125 7 V8.5" stroke="#9a9a9a" stroke-width="1"/><text x="802.1" y="11" font-size="11" fill="#444" text-anchor="middle" font-family="Liberation Sans">16</text><path d="M808.1875 7 V8.5" stroke="#9a9a9a" stroke-width="1"/><path d="M814.2750000000001 4.5 V10.5" stroke="#9a9a9a" stroke-width="1"/><path d="M820.3625 7 V8.5" stroke="#9a9a9a" stroke-width="1"/></svg>
<svg style="left:171px;top:225px" width="15" height="465"><rect x="0.5" y="0.5" width="14" height="464" fill="#fff" stroke="#d8d8d8" stroke-dasharray="1 1"/><path d="M7 7.0625 H8.5" stroke="#9a9a9a" stroke-width="1"/><path d="M4.5 13.150000000000006 H10.5" stroke="#9a9a9a" stroke-width="1"/><path d="M7 19.23750000000001 H8.5" stroke="#9a9a9a" stroke-width="1"/><path d="M4.5 25.32499999999999 H10.5" stroke="#9a9a9a" stroke-width="1"/><path d="M7 31.412500000000023 H8.5" stroke="#9a9a9a" stroke-width="1"/><text x="0" y="0" transform="translate(11 37.5) rotate(-90)" font-size="11" fill="#444" text-anchor="middle" font-family="Liberation Sans">8</text><path d="M7 43.58749999999998 H8.5" stroke="#9a9a9a" stroke-width="1"/><path d="M4.5 49.67500000000001 H10.5" stroke="#9a9a9a" stroke-width="1"/><path d="M7 55.76249999999999 H8.5" stroke="#9a9a9a" stroke-width="1"/><path d="M4.5 61.85000000000002 H10.5" stroke="#9a9a9a" stroke-width="1"/><path d="M7 67.9375 H8.5" stroke="#9a9a9a" stroke-width="1"/><path d="M4.5 74.02499999999998 H10.5" stroke="#9a9a9a" stroke-width="1"/><path d="M7 80.11250000000001 H8.5" stroke="#9a9a9a" stroke-width="1"/><text x="0" y="0" transform="translate(11 86.19999999999999) rotate(-90)" font-size="11" fill="#444" text-anchor="middle" font-family="Liberation Sans">6</text><path d="M7 92.28750000000002 H8.5" stroke="#9a9a9a" stroke-width="1"/><path d="M4.5 98.375 H10.5" stroke="#9a9a9a" stroke-width="1"/><path d="M7 104.46249999999998 H8.5" stroke="#9a9a9a" stroke-width="1"/><path d="M4.5 110.55000000000001 H10.5" stroke="#9a9a9a" stroke-width="1"/><path d="M7 116.63749999999999 H8.5" stroke="#9a9a9a" stroke-width="1"/><path d="M4.5 122.72500000000002 H10.5" stroke="#9a9a9a" stroke-width="1"/><path d="M7 128.8125 H8.5" stroke="#9a9a9a" stroke-width="1"/><text x="0" y="0" transform="translate(11 134.89999999999998) rotate(-90)" font-size="11" fill="#444" text-anchor="middle" font-family="Liberation Sans">4</text><path d="M7 140.9875 H8.5" stroke="#9a9a9a" stroke-width="1"/><path d="M4.5 147.075 H10.5" stroke="#9a9a9a" stroke-width="1"/><path d="M7 153.16250000000002 H8.5" stroke="#9a9a9a" stroke-width="1"/><path d="M4.5 159.25 H10.5" stroke="#9a9a9a" stroke-width="1"/><path d="M7 165.33749999999998 H8.5" stroke="#9a9a9a" stroke-width="1"/><path d="M4.5 171.425 H10.5" stroke="#9a9a9a" stroke-width="1"/><path d="M7 177.5125 H8.5" stroke="#9a9a9a" stroke-width="1"/><text x="0" y="0" transform="translate(11 183.60000000000002) rotate(-90)" font-size="11" fill="#444" text-anchor="middle" font-family="Liberation Sans">2</text><path d="M7 189.6875 H8.5" stroke="#9a9a9a" stroke-width="1"/><path d="M4.5 195.77499999999998 H10.5" stroke="#9a9a9a" stroke-width="1"/><path d="M7 201.8625 H8.5" stroke="#9a9a9a" stroke-width="1"/><path d="M4.5 207.95 H10.5" stroke="#9a9a9a" stroke-width="1"/><path d="M7 214.03750000000002 H8.5" stroke="#9a9a9a" stroke-width="1"/><path d="M4.5 220.125 H10.5" stroke="#9a9a9a" stroke-width="1"/><path d="M7 226.21250000000003 H8.5" stroke="#9a9a9a" stroke-width="1"/><text x="0" y="0" transform="translate(11 232.3) rotate(-90)" font-size="11" fill="#444" text-anchor="middle" font-family="Liberation Sans">0</text><path d="M7 238.3875 H8.5" stroke="#9a9a9a" stroke-width="1"/><path d="M4.5 244.47500000000002 H10.5" stroke="#9a9a9a" stroke-width="1"/><path d="M7 250.5625 H8.5" stroke="#9a9a9a" stroke-width="1"/><path d="M4.5 256.65000000000003 H10.5" stroke="#9a9a9a" stroke-width="1"/><path d="M7 262.7375 H8.5" stroke="#9a9a9a" stroke-width="1"/><path d="M4.5 268.82500000000005 H10.5" stroke="#9a9a9a" stroke-width="1"/><path d="M7 274.9125 H8.5" stroke="#9a9a9a" stroke-width="1"/><text x="0" y="0" transform="translate(11 281.0) rotate(-90)" font-size="11" fill="#444" text-anchor="middle" font-family="Liberation Sans">2</text><path d="M7 287.0875 H8.5" stroke="#9a9a9a" stroke-width="1"/><path d="M4.5 293.17499999999995 H10.5" stroke="#9a9a9a" stroke-width="1"/><path d="M7 299.26250000000005 H8.5" stroke="#9a9a9a" stroke-width="1"/><path d="M4.5 305.35 H10.5" stroke="#9a9a9a" stroke-width="1"/><path d="M7 311.4375 H8.5" stroke="#9a9a9a" stroke-width="1"/><path d="M4.5 317.525 H10.5" stroke="#9a9a9a" stroke-width="1"/><path d="M7 323.61249999999995 H8.5" stroke="#9a9a9a" stroke-width="1"/><text x="0" y="0" transform="translate(11 329.70000000000005) rotate(-90)" font-size="11" fill="#444" text-anchor="middle" font-family="Liberation Sans">4</text><path d="M7 335.7875 H8.5" stroke="#9a9a9a" stroke-width="1"/><path d="M4.5 341.875 H10.5" stroke="#9a9a9a" stroke-width="1"/><path d="M7 347.9625 H8.5" stroke="#9a9a9a" stroke-width="1"/><path d="M4.5 354.04999999999995 H10.5" stroke="#9a9a9a" stroke-width="1"/><path d="M7 360.13750000000005 H8.5" stroke="#9a9a9a" stroke-width="1"/><path d="M4.5 366.225 H10.5" stroke="#9a9a9a" stroke-width="1"/><path d="M7 372.3125 H8.5" stroke="#9a9a9a" stroke-width="1"/><text x="0" y="0" transform="translate(11 378.4000000000001) rotate(-90)" font-size="11" fill="#444" text-anchor="middle" font-family="Liberation Sans">6</text><path d="M7 384.48749999999995 H8.5" stroke="#9a9a9a" stroke-width="1"/><path d="M4.5 390.57500000000005 H10.5" stroke="#9a9a9a" stroke-width="1"/><path d="M7 396.6625 H8.5" stroke="#9a9a9a" stroke-width="1"/><path d="M4.5 402.75 H10.5" stroke="#9a9a9a" stroke-width="1"/><path d="M7 408.8375000000001 H8.5" stroke="#9a9a9a" stroke-width="1"/><path d="M4.5 414.92499999999995 H10.5" stroke="#9a9a9a" stroke-width="1"/><path d="M7 421.01250000000005 H8.5" stroke="#9a9a9a" stroke-width="1"/><text x="0" y="0" transform="translate(11 427.1) rotate(-90)" font-size="11" fill="#444" text-anchor="middle" font-family="Liberation Sans">8</text><path d="M7 433.1875 H8.5" stroke="#9a9a9a" stroke-width="1"/><path d="M4.5 439.2750000000001 H10.5" stroke="#9a9a9a" stroke-width="1"/><path d="M7 445.36249999999995 H8.5" stroke="#9a9a9a" stroke-width="1"/><path d="M4.5 451.45000000000005 H10.5" stroke="#9a9a9a" stroke-width="1"/><path d="M7 457.5375 H8.5" stroke="#9a9a9a" stroke-width="1"/></svg>
<div class="a" style="left:215px;top:224px;width:829px;height:467px;border:1px solid #c6c6c6;background:#fff"></div>
<svg style="left:0;top:0" width="1366" height="728">
<path d="M629.5 214 V699" stroke="#7a7a7a" stroke-width="1" stroke-dasharray="3 3"/>
<path d="M193 458.5 H1064" stroke="#7a7a7a" stroke-width="1" stroke-dasharray="3 3"/>
<path d="M601 271.5 H657.5 L629.5 491 Z" fill="#f8bd5a"/>
<path d="M629.5 271.5 V491" stroke="#c89a50" stroke-width="1" stroke-dasharray="3 3" opacity="0.8"/>
<rect x="599.5" y="271.5" width="59" height="226" fill="none" stroke="#8e8e8e" stroke-width="1"/>
<path d="M629.5 497.5 V523" stroke="#8e8e8e" stroke-width="1"/>
<g fill="#fff" stroke="#8e8e8e" stroke-width="1.6">
<circle cx="599.5" cy="271.5" r="4.6"/><circle cx="629.5" cy="271.5" r="4.6"/><circle cx="658.5" cy="271.5" r="4.6"/>
<circle cx="599.5" cy="384" r="4.6"/><circle cx="658.5" cy="384" r="4.6"/>
<circle cx="599.5" cy="497.5" r="4.6"/><circle cx="658.5" cy="497.5" r="4.6"/>
<circle cx="629.5" cy="497.5" r="4.6" fill="#f4e08c"/>
</g>
<g transform="translate(629.5 532)">
<path d="M-5.5 -5.5 A7.8 7.8 0 1 1 -7.8 0" fill="none" stroke="#8e8e8e" stroke-width="5"/>
<path d="M-5.5 -5.5 A7.8 7.8 0 1 1 -7.8 0" fill="none" stroke="#fff" stroke-width="2.2"/>
<path d="M-13 -1 L-4 -9 L-3 1 Z" fill="#fff" stroke="#8e8e8e" stroke-width="1.5" stroke-linejoin="round"/>
</g>
</svg>
<div class="t" style="left:1095px;top:182px;font-size:21px;color:#c4573e;font-weight:normal;line-height:26px;top:177px;-webkit-text-stroke-width:0;">设置形状格式</div>
<svg style="left:1295px;top:182px" width="10" height="6"><path d="M0 0 H10 L5 5.5 Z" fill="#666"/></svg>
<svg style="left:1336px;top:179px" width="12" height="12"><path d="M1 1 L11 11 M11 1 L1 11" stroke="#555" stroke-width="1.8"/></svg>
<div class="t" style="left:1100px;top:214px;font-size:12px;color:#222;font-weight:bold;-webkit-text-stroke-width:0;">形状选项</div>
<div class="a" style="left:1161px;top:213px;width:1px;height:17px;background:#e0e0e0"></div>
<div class="t" style="left:1166px;top:214px;font-size:12px;color:#333;font-weight:normal;">文本选项</div>
<svg style="left:1100px;top:242px" width="26" height="26"><path d="M2 13 L12 3 L22 13 L12 23 Z" fill="#fff" stroke="#c0543a" stroke-width="1.4"/><path d="M9.5 6 V2.5 C9.5 1 12.5 1 12.5 2.5 V10" stroke="#c0543a" stroke-width="1.3" fill="none"/><circle cx="12.5" cy="10" r="1.2" fill="#c0543a"/><path d="M20.5 11 C24.5 12 25 16 23 19" stroke="#c0543a" stroke-width="2" fill="none"/><path d="M20.5 17.5 L23 21.5 L25.5 16.5 Z" fill="#c0543a"/></svg>
<svg style="left:1140px;top:243px" width="25" height="25"><path d="M12 2 L22 9.5 L18.5 21 H5.5 L2 9.5 Z" fill="none" stroke="#777" stroke-width="1.3"/><path d="M5.5 21 L3 24 M18.5 21 L21 24" stroke="#aaa" stroke-width="1"/></svg>
<svg style="left:1180px;top:243px" width="25" height="25"><path d="M2.5 8 V23 M0.5 8 H4.5 M0.5 23 H4.5" stroke="#777" stroke-width="1"/><path d="M8 3 H22 M8 1 V5 M22 1 V5" stroke="#777" stroke-width="1"/><rect x="8" y="9" width="14" height="14" fill="#6d6d6d"/><path d="M15 11 V21 M10 16 H20 M13.5 12.5 L15 11 L16.5 12.5 M13.5 19.5 L15 21 L16.5 19.5 M11.5 14.5 L10 16 L11.5 17.5 M18.5 14.5 L20 16 L18.5 17.5" stroke="#fff" stroke-width="0.9" fill="none"/></svg>
<svg style="left:1095px;top:277px" width="258" height="10"><path d="M0 8.5 H10 L17 1.5 L24 8.5 H258" fill="none" stroke="#d0d0d0" stroke-width="1"/></svg>
<svg style="left:1102px;top:295px" width="8" height="8"><path d="M7 0.5 V7 H0.5 Z" fill="#444"/></svg>
<div class="t" style="left:1117px;top:292px;font-size:12px;color:#c0543a;font-weight:bold;-webkit-text-stroke-width:0;">填充</div>
<svg style="left:1118px;top:325px" width="12" height="12"><circle cx="6" cy="6" r="5.3" fill="#fff" stroke="#9a9a9a" stroke-width="1"/></svg>
<div class="t" style="left:1135px;top:323px;font-size:12px;color:#333;font-weight:normal;">无填充(<u>N</u>)</div>
<svg style="left:1118px;top:350px" width="12" height="12"><circle cx="6" cy="6" r="5.3" fill="#fff" stroke="#9a9a9a" stroke-width="1"/><circle cx="6" cy="6" r="2.6" fill="#666"/></svg>
<div class="t" style="left:1135px;top:348px;font-size:12px;color:#333;font-weight:normal;">纯色填充(<u>S</u>)</div>
<svg style="left:1118px;top:375px" width="12" height="12"><circle cx="6" cy="6" r="5.3" fill="#fff" stroke="#9a9a9a" stroke-width="1"/></svg>
<div class="t" style="left:1135px;top:373px;font-size:12px;color:#333;font-weight:normal;">渐变填充(<u>G</u>)</div>
<svg style="left:1118px;top:400px" width="12" height="12"><circle cx="6" cy="6" r="5.3" fill="#fff" stroke="#9a9a9a" stroke-width="1"/></svg>
<div class="t" style="left:1135px;top:398px;font-size:12px;color:#333;font-weight:normal;">图片或纹理填充(<u>P</u>)</div>
<svg style="left:1118px;top:425px" width="12" height="12"><circle cx="6" cy="6" r="5.3" fill="#fff" stroke="#9a9a9a" stroke-width="1"/></svg>
<div class="t" style="left:1135px;top:423px;font-size:12px;color:#333;font-weight:normal;">图案填充(<u>A</u>)</div>
<svg style="left:1118px;top:450px" width="12" height="12"><circle cx="6" cy="6" r="5.3" fill="#fff" stroke="#9a9a9a" stroke-width="1"/></svg>
<div class="t" style="left:1135px;top:448px;font-size:12px;color:#333;font-weight:normal;">幻灯片背景填充(<u>B</u>)</div>
<div class="a" style="left:1116px;top:473px;width:216px;height:1px;background:#dadada"></div>
<div class="t" style="left:1127px;top:486px;font-size:12px;color:#333;font-weight:normal;">颜色(<u>C</u>)</div>
<div class="a" style="left:1288px;top:481px;width:44px;height:26px;border:1px solid #c6c6c6;background:#fff"></div>
<svg style="left:1296px;top:484px" width="32" height="20"><path d="M3 9 L8 4 L13 9 L8 14 Z" fill="#fff" stroke="#555"/><path d="M6 4 C6 2 9 2 9 4 V7" stroke="#555" fill="none"/><path d="M13 8 C15 9 15 12 14 12" stroke="#3d6a9e" stroke-width="1.3" fill="none"/><rect x="1" y="15" width="16" height="4" fill="#e8a020"/><path d="M23 9 H29 L26 12 Z" fill="#555"/></svg>
<div class="t" style="left:1127px;top:519px;font-size:12px;color:#333;font-weight:normal;">透明度(<u>T</u>)</div>
<svg style="left:1186px;top:519px" width="38" height="14"><path d="M1 7 H36" stroke="#999" stroke-width="1"/><path d="M1 7 H16" stroke="#555" stroke-width="1.6"/><path d="M15 2 V12" stroke="#444" stroke-width="1.6"/></svg>
<div class="a" style="left:1229px;top:514px;width:103px;height:26px;border:1px solid #c6c6c6;background:#fff"></div>
<div class="t" style="left:1236px;top:519px;font-size:12px;color:#333;font-weight:normal;font-size:13px;">38%</div>
<svg style="left:1318px;top:517px" width="10" height="20"><path d="M1.5 6 L5 2 L8.5 6 Z" fill="#555"/><path d="M1.5 13 H8.5 L5 17 Z" fill="#555"/></svg>
<svg style="left:1103px;top:558px" width="8" height="11"><path d="M1 1 L6 5.5 L1 10 Z" fill="none" stroke="#777"/></svg>
<div class="t" style="left:1117px;top:556px;font-size:12px;color:#333;font-weight:bold;-webkit-text-stroke-width:0;">线条</div>
<div class="a" style="left:0;top:706px;width:1366px;height:22px;background:#d24726"></div>
<div class="t" style="left:8px;top:708px;font-size:12px;color:#fbe3da;font-weight:normal;-webkit-text-stroke-width:0.4px;letter-spacing:0.2px">幻灯片 第 1 张，共 1 张</div>
<svg style="left:156px;top:708px" width="18" height="17"><path d="M1.5 1.5 H7.5 V13.5 H1.5 Z M7.5 1.5 H13 C14 1.5 14.5 2 14.5 3 V12.5 C14.5 13 14 13.5 13 13.5 H7.5" fill="none" stroke="#fbe3da" stroke-width="1"/><path d="M9 7.5 L10.5 10 L13.5 4.5" stroke="#fbe3da" stroke-width="1.1" fill="none"/><path d="M5.5 13.5 L7.5 15.5 L9.5 13.5" stroke="#fbe3da" fill="none"/></svg>
<div class="t" style="left:189px;top:708px;font-size:12px;color:#fbe3da;font-weight:normal;-webkit-text-stroke-width:0.4px;">中文(中国)</div>
<svg style="left:953px;top:709px" width="14" height="15"><path d="M4 4 L7 1 L10 4 Z" fill="#fbe3da"/><path d="M1 7.5 H13 M3 10.5 H11 M1 13.5 H13" stroke="#fbe3da"/></svg>
<div class="t" style="left:970px;top:708px;font-size:12px;color:#fbe3da;font-weight:normal;-webkit-text-stroke-width:0.4px;">备注</div>
<div class="a" style="left:1012px;top:706px;width:38px;height:22px;background:#b23b1e"></div>
<svg style="left:1024px;top:708px" width="16" height="17"><rect x="1" y="1" width="14" height="15" fill="#fbe3da"/><rect x="4" y="3.5" width="8" height="5" fill="#b23b1e"/><rect x="4" y="10.5" width="9" height="2.5" fill="#b23b1e"/></svg>
<svg style="left:1062px;top:709px" width="16" height="15"><rect x="1" y="1" width="6" height="6" fill="#fbe3da"/><rect x="9" y="1" width="6" height="6" fill="#fbe3da"/><rect x="1" y="9" width="6" height="6" fill="#fbe3da"/><rect x="9" y="9" width="6" height="6" fill="#fbe3da"/></svg>
<svg style="left:1100px;top:708px" width="16" height="17"><path d="M1.5 2 C4 1 6 1 8 3 C10 1 12 1 14.5 2 V15 C12 14 10 14 8 15.5 C6 14 4 14 1.5 15 Z" fill="none" stroke="#fbe3da" stroke-width="1.2"/><path d="M8 3 V15.5 M3.5 5 H6.5 M3.5 8 H6.5 M3.5 11 H6.5 M9.5 5 H12.5 M9.5 8 H12.5 M9.5 11 H12.5" stroke="#fbe3da"/></svg>
<svg style="left:1138px;top:708px" width="16" height="17"><rect x="1.5" y="1.5" width="13" height="9" fill="none" stroke="#fbe3da" stroke-width="1.3"/><path d="M8 10.5 V15 M5 15.5 H11" stroke="#fbe3da" stroke-width="1.3"/></svg>
<div class="a" style="left:1170px;top:716px;width:6px;height:2px;background:#fbe3da"></div>
<div class="a" style="left:1180px;top:716px;width:31px;height:1.5px;background:#fbe3da"></div>
<div class="a" style="left:1210px;top:715px;width:4px;height:8px;background:#fbe3da"></div>
<div class="a" style="left:1230px;top:716px;width:51px;height:1.5px;background:#fbe3da"></div>
<div class="a" style="left:1284px;top:716px;width:9px;height:2px;background:#fbe3da"></div>
<div class="a" style="left:1287.5px;top:712.5px;width:2px;height:9px;background:#fbe3da"></div>
<div class="t" style="left:1308px;top:710px;font-size:13px;color:#fbe3da;font-weight:normal;">65%</div>
<svg style="left:1345px;top:709px" width="16" height="16"><path d="M1.5 5 V1.5 H5 M11 1.5 H14.5 V5 M14.5 11 V14.5 H11 M5 14.5 H1.5 V11" fill="none" stroke="#fbe3da" stroke-width="1.1"/><path d="M5 5 L7 7 M11 11 L9 9 M11 5 L9 7 M5 11 L7 9" stroke="#fbe3da"/></svg>
<svg style="left:1198px;top:674px" width="170" height="54">
<text x="52" y="42" font-size="13" fill="#e8743a" opacity="0.45" font-family="Liberation Sans">www.office26.com</text>
<path d="M22.5 6 L39.5 15.5 V36 L22.5 45.5 L5.5 36 V15.5 Z" fill="#df5a17" stroke="#df5a17" stroke-width="3" stroke-linejoin="round"/>
<path d="M14 20 L25 15.5 V35 L14 31.5 Z" fill="#fff"/><path d="M25 15.5 L30 17.5 V33 L25 35" fill="#fde8d8"/><path d="M17.5 22 L22.5 20.5 V30 L17.5 29 Z" fill="#df5a17"/>
<text x="47" y="28" font-size="19" font-weight="bold" fill="#1a96dc" font-family="Liberation Sans">Office</text>
<text x="102" y="28.5" font-size="19" font-weight="bold" fill="#1a96dc" font-family="Liberation Sans">教程网</text>
</svg></body></html>
